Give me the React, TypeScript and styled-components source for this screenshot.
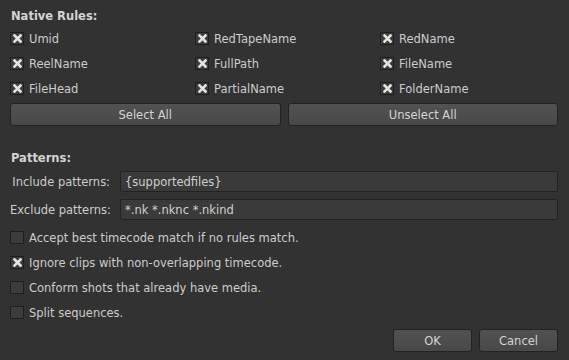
import styled, { createGlobalStyle } from "styled-components";

const Global = createGlobalStyle`
  html, body {
    margin: 0;
    padding: 0;
    background: #323232;
  }
  body {
    font-family: "DejaVu Sans", Verdana, sans-serif;
    font-size: 11.5px;
    color: #cdcdcd;
  }
`;

const Dialog = styled.div`
  width: 569px;
  height: 360px;
  box-sizing: border-box;
  padding: 9px 11px 0 10px;
  display: flex;
  flex-direction: column;
`;

const Heading = styled.div<{ $gap?: number }>`
  font-weight: 700;
  color: #d4d4d4;
  height: 14px;
  line-height: 14px;
  padding-left: 1px;
  margin-top: ${(p) => p.$gap ?? 0}px;
`;

const RuleGrid = styled.div`
  display: grid;
  grid-template-columns: 185px 185px 1fr;
  grid-auto-rows: 13px;
  row-gap: 12px;
  margin-top: 9px;
`;

const CheckRow = styled.label`
  display: flex;
  align-items: center;
  gap: 5px;
  height: 13px;
  white-space: nowrap;
`;

const Box = styled.span`
  width: 14px;
  height: 13px;
  box-sizing: border-box;
  border: 1px solid #1e1e1e;
  background: #3c3c3c;
  display: flex;
  align-items: center;
  justify-content: center;
  flex-shrink: 0;
`;

const ButtonRow = styled.div`
  display: flex;
  gap: 7px;
  margin-top: 8px;
`;

const Button = styled.button<{ $w?: number }>`
  font-family: inherit;
  font-size: 11.5px;
  color: #d4d4d4;
  height: 23px;
  ${(p) => (p.$w ? `width: ${p.$w}px;` : "flex: 1;")}
  background: linear-gradient(#525252, #484848);
  border: 1px solid #222;
  border-radius: 3px;
  padding: 0;
`;

const FormGrid = styled.div`
  display: grid;
  grid-template-columns: 110px 1fr;
  row-gap: 7px;
  margin-top: 6px;
  align-items: center;
`;

const FieldLabel = styled.span`
  text-align: right;
  padding-right: 10px;
  white-space: nowrap;
`;

const Field = styled.div`
  height: 21px;
  box-sizing: border-box;
  border: 1px solid #222;
  border-radius: 2px;
  background: #3a3a3a;
  padding: 0 4px;
  display: flex;
  align-items: center;
  color: #d0d0d0;
`;

const Options = styled.div`
  display: flex;
  flex-direction: column;
  gap: 12px;
  margin-top: 11px;
`;

const Footer = styled.div`
  display: flex;
  justify-content: flex-end;
  gap: 7px;
  margin-top: 10px;
`;

const Cross = () => (
  <svg width="9" height="9" viewBox="0 0 9 9">
    <path d="M1.5 1.5 L7.5 7.5 M7.5 1.5 L1.5 7.5" stroke="#e4e4e4" strokeWidth="2.6" strokeLinecap="square" />
  </svg>
);

const Check = ({ label, checked }: { label: string; checked?: boolean }) => (
  <CheckRow>
    <Box>{checked && <Cross />}</Box>
    {label}
  </CheckRow>
);

const rules = [
  "Umid", "RedTapeName", "RedName",
  "ReelName", "FullPath", "FileName",
  "FileHead", "PartialName", "FolderName",
];

export default function App() {
  return (
    <>
      <Global />
      <Dialog>
        <Heading>Native Rules:</Heading>
        <RuleGrid>
          {rules.map((r) => (
            <Check key={r} label={r} checked />
          ))}
        </RuleGrid>
        <ButtonRow>
          <Button>Select All</Button>
          <Button>Unselect All</Button>
        </ButtonRow>
        <Heading $gap={25}>Patterns:</Heading>
        <FormGrid>
          <FieldLabel>Include patterns:</FieldLabel>
          <Field>{"{supportedfiles}"}</Field>
          <FieldLabel>Exclude patterns:</FieldLabel>
          <Field>*.nk *.nknc *.nkind</Field>
        </FormGrid>
        <Options>
          <Check label="Accept best timecode match if no rules match." />
          <Check label="Ignore clips with non-overlapping timecode." checked />
          <Check label="Conform shots that already have media." />
          <Check label="Split sequences." />
        </Options>
        <Footer>
          <Button $w={79}>OK</Button>
          <Button $w={79}>Cancel</Button>
        </Footer>
      </Dialog>
    </>
  );
}
